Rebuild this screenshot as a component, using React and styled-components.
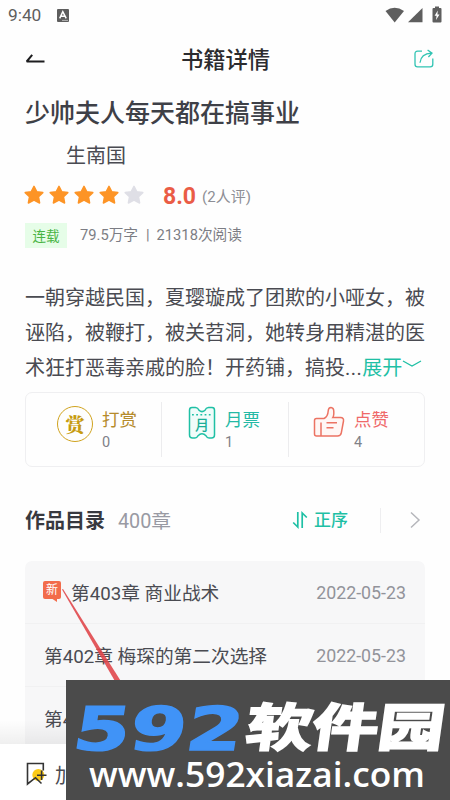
import React from "react";
import styled, { createGlobalStyle } from "styled-components";

const TEAL = "#1fc0a5";

export default function App() {
  return (
    <Page>
      <GlobalStyle />
      <StatusBar>
        <span>9:40</span>
        <KeyboardIcon />
        <SignalIcons />
      </StatusBar>
      <Header>
        <BackIcon />
        <HeaderTitle>书籍详情</HeaderTitle>
        <ShareIcon />
      </Header>

      <BookTitle>少帅夫人每天都在搞事业</BookTitle>
      <Author>生南国</Author>
      <Rating>
        {[1, 2, 3, 4, 5].map((n) => (
          <Star key={n} on={n <= BOOK.stars} />
        ))}
        <Score>8.0</Score>
        <Voters>(2人评)</Voters>
      </Rating>
      <Meta>
        <Tag>连载</Tag>
        <span>79.5万字</span>
        <i>|</i>
        <span>21318次阅读</span>
      </Meta>

      <Summary>
        {BOOK.summary.map((line) => (
          <div key={line}>{line}</div>
        ))}
        <div>
          术狂打恶毒亲戚的脸！开药铺，搞投<Dots>...</Dots>
          <Expand>
            展开
            <svg width="20" height="10" viewBox="0 0 20 10">
              <path d="M1 2 L10 7 L19 2" fill="none" stroke={TEAL} strokeWidth="1.3" />
            </svg>
          </Expand>
        </div>
      </Summary>

      <Actions>
        {ACTIONS.map(({ name, count, color, icon: Icon }) => (
          <Action key={name}>
            <Icon />
            <div>
              <ActionName $color={color}>{name}</ActionName>
              <ActionCount>{count}</ActionCount>
            </div>
          </Action>
        ))}
      </Actions>

      <CatalogHead>
        <h2>作品目录</h2>
        <Total>400章</Total>
        <Order>
          <SortIcon />
          正序
        </Order>
        <More>
          <svg width="12" height="18" viewBox="0 0 12 18">
            <path d="M2 1.5 L10 9 L2 16.5" fill="none" stroke="#b5b6bb" strokeWidth="1.5" />
          </svg>
        </More>
      </CatalogHead>

      <Catalog>
        {CHAPTERS.map((c) => (
          <Chapter key={c.name}>
            {c.isNew && <NewBadge>新</NewBadge>}
            <ChapterName>{c.name}</ChapterName>
            <ChapterDate>{c.date}</ChapterDate>
          </Chapter>
        ))}
      </Catalog>

      <BottomBar>
        <BookmarkIcon />
        加
      </BottomBar>

      <Pointer width="62" height="98" viewBox="0 0 62 98">
        <path d="M1 0 L60 94 L54 94 L0 0.6 Z" fill="#e0474b" fillOpacity="0.9" />
      </Pointer>
      <Watermark>
        <SiteLogo />
      </Watermark>
    </Page>
  );
}

function KeyboardIcon() {
  return (
    <svg width="12" height="13" viewBox="0 0 12 13">
      <rect width="12" height="13" rx="1" fill="#5e5e5e" />
      <path d="M2.7 9.4 L5.8 2.7 L9.2 9.4 M4.2 7.2 H7.8" fill="none" stroke="#fff" strokeWidth="1.5" />
      <path d="M5 11.4 H11" stroke="#ddd" strokeWidth="0.7" />
    </svg>
  );
}

function SignalIcons() {
  return (
    <svg width="58" height="18" viewBox="0 0 58 18">
      <path d="M0.5 5 Q9.5 -1.6 19 5 L9.7 16.4 Z" fill="#5e5e5e" />
      <path d="M37.5 2 V16.3 H23 Z" fill="#5e5e5e" />
      <path
        d="M50 0.5 H54 V2 H55.5 Q56.5 2 56.5 3 V15.5 Q56.5 16.5 55.5 16.5 H48.5 Q47.5 16.5 47.5 15.5 V3 Q47.5 2 48.5 2 H50 Z"
        fill="#5e5e5e"
      />
      <path d="M52.8 4.5 L49.6 9.7 H51.6 L51 14 L54.5 8.4 H52.4 Z" fill="#fff" />
    </svg>
  );
}

function BackIcon() {
  return (
    <svg width="20" height="10" viewBox="0 0 20 10">
      <path d="M7.2 0.9 L1.7 7.5 H19.5" fill="none" stroke="#1d1d1f" strokeWidth="2" strokeLinejoin="bevel" />
    </svg>
  );
}

function ShareIcon() {
  return (
    <svg width="20" height="20" viewBox="0 0 20 20" fill="none" stroke="#31c4b3" strokeWidth="1.3">
      <path d="M8 2.2 H3.6 Q1 2.2 1 4.8 V15.2 Q1 17.8 3.6 17.8 H16.2 Q18.8 17.8 18.8 15.2 V9.6" />
      <path d="M6 13.8 Q6.8 4.8 17.6 4.2 M13.6 1 L18 4.2 L14.4 8" />
    </svg>
  );
}

function Star({ on }) {
  const color = on ? "#fd9426" : "#dfdfe6";
  return (
    <svg width="20" height="20" viewBox="0 0 20 20">
      <path
        d="M10 1.4 L12.7 6.7 L18.8 7.6 L14.5 11.8 L15.6 18 L10 15.2 L4.4 18 L5.5 11.8 L1.2 7.6 L7.3 6.7 Z"
        fill={color}
        stroke={color}
        strokeWidth="1.5"
        strokeLinejoin="round"
      />
    </svg>
  );
}

function RewardIcon() {
  return <Coin>赏</Coin>;
}

function TicketIcon() {
  return (
    <svg width="28" height="34" viewBox="0 0 28 34">
      <path
        d="M4 1.6 H7.5 Q10 1.8 11 4.2 Q14 7 17 4.2 Q18 1.8 20.5 1.6 H24 Q26.5 1.6 26.5 4.2 V29 Q26.5 32 23.5 32 H21 Q19 32 18.2 30 Q14 25.6 9.8 30 Q9 32 7 32 H4.5 Q1.5 32 1.5 29 V4.2 Q1.5 1.6 4 1.6 Z"
        fill="#f0fcfa"
        stroke={TEAL}
        strokeWidth="1.5"
      />
      <path d="M4 8.8 H25" stroke={TEAL} strokeWidth="1.5" strokeDasharray="1.8 2.4" />
      <text x="14" y="24" textAnchor="middle" fontSize="14" fontWeight="500" fill="#1aae98">
        月
      </text>
    </svg>
  );
}

function LikeIcon() {
  return (
    <svg width="32" height="32" viewBox="0 0 32 32">
      <path
        d="M3.5 12.5 H11 Q14.8 10.8 15.2 5 Q15.4 1.4 18 1.4 Q20.8 1.6 20.8 5.5 V8 Q20.6 10.4 19.8 11.6 H27.5 Q31 11.8 30.5 15 L28.3 26.8 Q27.6 30 24.5 30 H3.5 Q1.5 30 1.5 28 V14.5 Q1.5 12.5 3.5 12.5 Z"
        fill="#fff7f5"
        stroke="#ec7363"
        strokeWidth="1.5"
      />
      <path d="M8 16.5 V30 M13.5 16.8 H24 M13.5 21.8 H20.5" fill="none" stroke="#ec7363" strokeWidth="1.5" />
    </svg>
  );
}

function SortIcon() {
  return (
    <svg width="16" height="18" viewBox="0 0 16 18" fill="none" stroke={TEAL} strokeWidth="1.7">
      <path d="M5.8 1 V16 L1.2 11.5" />
      <path d="M10.2 17 V2 L14.8 6.5" />
    </svg>
  );
}

function BookmarkIcon() {
  return (
    <svg width="22" height="24" viewBox="0 0 22 24">
      <circle cx="12.3" cy="13" r="6" fill="#fcca16" />
      <path
        d="M17.3 8.5 V1.5 H1.5 V22 L9.5 15.7 L15.5 21.5 M15.6 8.5 V18 M11 13.2 H20.5"
        fill="none"
        stroke="#343434"
        strokeWidth="1.6"
      />
    </svg>
  );
}

function SiteLogo() {
  return (
    <svg width="384" height="120" viewBox="0 0 384 120">
      <g transform="translate(5 70) skewX(-9)">
        <LogoText
          fontSize="60"
          textLength="169"
          lengthAdjust="spacingAndGlyphs"
          fill="#4093f7"
          stroke="#4093f7"
          strokeWidth="1.5"
        >
          592
        </LogoText>
      </g>
      <g transform="translate(178 65.5) skewX(-8)">
        <LogoText
          fontSize="51"
          textLength="198"
          lengthAdjust="spacingAndGlyphs"
          fill="#fff"
          stroke="#fff"
          strokeWidth="2.2"
        >
          软件园
        </LogoText>
      </g>
      <UrlText x="23" y="107" textLength="336" lengthAdjust="spacingAndGlyphs">
        www.592xiazai.com
      </UrlText>
    </svg>
  );
}

const GlobalStyle = createGlobalStyle`
  * {
    box-sizing: border-box;
  }
  body {
    margin: 0;
    background: #fff;
    font-family: Roboto, "Noto Sans CJK SC", sans-serif;
    overflow: hidden;
  }
  svg {
    flex-shrink: 0;
  }
`;

const Page = styled.div`
  position: relative;
  width: 450px;
  height: 800px;
  overflow: hidden;
  background: #fefefe;
  color: #4a4b52;
  display: flex;
  flex-direction: column;
`;

const StatusBar = styled.div`
  height: 30px;
  flex-shrink: 0;
  display: flex;
  align-items: center;
  padding: 0 7px 0 8px;
  font-size: 17.3px;
  color: #5e5e5e;
  svg {
    margin-left: 16px;
  }
  svg:last-child {
    margin-left: auto;
  }
`;

const Header = styled.div`
  height: 58px;
  flex-shrink: 0;
  padding: 0 16px 0 25px;
  display: flex;
  align-items: center;
  justify-content: space-between;
`;

const HeaderTitle = styled.div`
  font-size: 22.3px;
  font-weight: 500;
  color: #2b2b2e;
  line-height: 30px;
  margin: 1px 0 0 -8px;
`;

const BookTitle = styled.h1`
  margin: 8px 0 0 25px;
  font-size: 25px;
  line-height: 36px;
  font-weight: 500;
  color: #3e4047;
`;

const Author = styled.div`
  margin: 9px 0 0 66px;
  font-size: 20px;
  line-height: 30px;
`;

const Rating = styled.div`
  height: 28px;
  flex-shrink: 0;
  margin: 10px 0 0 24px;
  display: flex;
  align-items: center;
  gap: 5px;
`;

const Score = styled.span`
  margin: 2px 0 0 14px;
  font-size: 23px;
  font-weight: 700;
  color: #ea5c46;
`;

const Voters = styled.span`
  margin-left: 1px;
  font-size: 15px;
  color: #8d8e95;
`;

const Meta = styled.div`
  height: 25px;
  flex-shrink: 0;
  margin: 14px 0 0 25px;
  display: flex;
  align-items: center;
  font-size: 14.7px;
  line-height: 22px;
  color: #7c7d84;
  span,
  i {
    margin-top: -2px;
  }
  i {
    font-style: normal;
    margin-left: 8px;
    margin-right: 7px;
  }
`;

const Tag = styled.b`
  width: 42px;
  height: 25px;
  margin-right: 13px;
  font-size: 13.5px;
  font-weight: 400;
  line-height: 26px;
  text-align: center;
  color: #49b445;
  background: #e6fde8;
`;

const Summary = styled.div`
  margin: 33px 0 0 25px;
  font-size: 20px;
  line-height: 35px;
  white-space: nowrap;
`;

const Dots = styled.span`
  letter-spacing: 0.5px;
`;

const Expand = styled.span`
  color: ${TEAL};
  svg {
    vertical-align: 6px;
  }
`;

const Actions = styled.div`
  width: 400px;
  height: 75px;
  flex-shrink: 0;
  margin: 6px 0 0 25px;
  border: 1.5px solid #efeff1;
  border-radius: 7px;
  display: grid;
  grid-template-columns: 136px 127px 1fr;
  align-items: center;
`;

const Action = styled.div`
  height: 55px;
  display: flex;
  gap: 9px;
  padding: 4px 0 0 26px;
  border-right: 1px solid #ececee;
  &:nth-child(1) {
    padding-left: 31px;
  }
  &:last-child {
    padding-left: 24px;
    border-right: 0;
  }
`;

const ActionName = styled.div`
  font-size: 17.5px;
  line-height: 28px;
  color: ${(p) => p.$color};
`;

const ActionCount = styled.div`
  font-size: 14.5px;
  line-height: 18px;
  color: #808188;
`;

const Coin = styled.div`
  width: 36px;
  height: 36px;
  border: 1.5px solid #d0a31e;
  border-radius: 50%;
  font-family: "Noto Serif CJK SC", "Noto Sans CJK SC", serif;
  font-size: 19px;
  font-weight: 900;
  line-height: 33px;
  text-align: center;
  color: #c79b10;
`;

const CatalogHead = styled.div`
  height: 30px;
  flex-shrink: 0;
  margin: 38px 25px 0;
  display: flex;
  align-items: center;
  h2 {
    margin: -2px 0 0;
    font-size: 20px;
    font-weight: 700;
    color: #38393f;
  }
`;

const Total = styled.span`
  margin: -2px 0 0 13px;
  font-size: 19.8px;
  color: #999aa3;
`;

const Order = styled.div`
  margin-left: auto;
  width: 89px;
  height: 25px;
  border-right: 1px solid #eeeef0;
  display: flex;
  align-items: center;
  gap: 6px;
  font-size: 17px;
  font-weight: 500;
  line-height: 22px;
  color: ${TEAL};
`;

const More = styled.div`
  width: 44px;
  height: 18px;
  svg {
    display: block;
    margin: 0 4px 0 auto;
  }
`;

const Catalog = styled.div`
  width: 400px;
  margin: 26px 0 0 25px;
  background: #f7f7f8;
  border-radius: 7px;
`;

const Chapter = styled.div`
  height: 63px;
  padding: 0 19px 0 19px;
  display: flex;
  align-items: center;
  border-bottom: 1px solid #f1f1f2;
`;

const ChapterName = styled.span`
  flex: 1;
  margin-top: -2px;
  font-size: 18.7px;
  white-space: nowrap;
`;

const ChapterDate = styled.span`
  margin-top: 1px;
  font-size: 17.8px;
  color: #92939a;
`;

const NewBadge = styled.span`
  position: relative;
  width: 18px;
  height: 18px;
  margin: -5px 10px 0 -1px;
  border-radius: 2px;
  background: #f26c4b;
  color: #fff;
  font-size: 12px;
  line-height: 18px;
  text-align: center;
  &::after {
    content: "";
    position: absolute;
    left: 8px;
    top: 17px;
    border-top: 4px solid #f26c4b;
    border-left: 6px solid transparent;
  }
`;

const BottomBar = styled.div`
  position: absolute;
  left: 0;
  bottom: 0;
  width: 450px;
  height: 56px;
  padding: 4px 0 0 26px;
  display: flex;
  align-items: center;
  gap: 7px;
  font-size: 20px;
  background: #fff;
  &::before {
    content: "";
    position: absolute;
    left: 0;
    right: 0;
    top: -24px;
    height: 24px;
    background: linear-gradient(transparent, rgba(0, 0, 0, 0.06));
  }
`;

const Pointer = styled.svg`
  position: absolute;
  left: 62px;
  top: 589px;
`;

const Watermark = styled.div`
  position: absolute;
  left: 66px;
  top: 680px;
  width: 384px;
  height: 120px;
  background: #4b4b4b;
`;

const LogoText = styled.text`
  font-family: "DejaVu Sans", "Noto Sans CJK SC", sans-serif;
  font-weight: 700;
`;

const UrlText = styled.text`
  font-family: "Open Sans", "Noto Sans", sans-serif;
  font-size: 34px;
  font-weight: 600;
  fill: #fff;
`;

const BOOK = {
  stars: 4,
  summary: ["一朝穿越民国，夏璎璇成了团欺的小哑女，被", "诬陷，被鞭打，被关苕洞，她转身用精湛的医"],
};

const ACTIONS = [
  { name: "打赏", count: 0, color: "#b58b2b", icon: RewardIcon },
  { name: "月票", count: 1, color: "#24b9a5", icon: TicketIcon },
  { name: "点赞", count: 4, color: "#ef6969", icon: LikeIcon },
];

const CHAPTERS = [
  { name: "第403章 商业战术", date: "2022-05-23", isNew: true },
  { name: "第402章 梅琛的第二次选择", date: "2022-05-23" },
  { name: "第401章", date: "2022-05-23" },
];
